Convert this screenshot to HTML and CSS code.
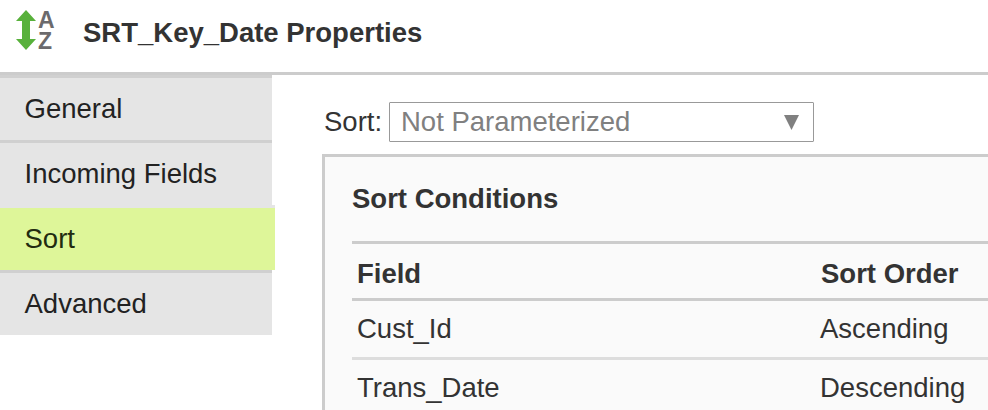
FILE: index.html
```html
<!DOCTYPE html>
<html lang="en">
<head>
<meta charset="utf-8">
<title>SRT_Key_Date Properties</title>
<link rel="stylesheet" href="styles.css">
</head>
<body>
<header class="header">
  <div class="logo">
    <svg class="arrow" width="20" height="40" viewBox="0 0 20 40" aria-hidden="true"><path d="M10 0 20 11H14V29H20L10 40 0 29H6V11H0Z" fill="#58b13b"/></svg>
    <span class="letters"><b>A</b><b>Z</b></span>
  </div>
  <h1 class="title">SRT_Key_Date Properties</h1>
</header>
<div class="body">
  <nav class="tabs">
    <a class="tab">General</a>
    <a class="tab">Incoming Fields</a>
    <a class="tab active">Sort</a>
    <a class="tab">Advanced</a>
  </nav>
  <main class="content">
    <div class="field">
      <label class="label">Sort:</label>
      <div class="select"><span>Not Parameterized</span>
        <svg width="15" height="15" viewBox="0 0 15 15" aria-hidden="true"><path d="M0 0H15L7.5 15Z" fill="#808080"/></svg>
      </div>
    </div>
    <section class="panel">
      <h2 class="panel-title">Sort Conditions</h2>
      <div class="row head"><span>Field</span><span>Sort Order</span></div>
      <div class="row first"><span>Cust_Id</span><span>Ascending</span></div>
      <div class="row"><span>Trans_Date</span><span>Descending</span></div>
    </section>
  </main>
</div>
</body>
</html>
```
FILE: styles.css
```css
* { box-sizing: border-box; }
body {
  margin: 0;
  height: 410px;
  overflow: hidden;
  display: flex;
  flex-direction: column;
  background: #fff;
  color: #333;
  font: 27.5px/32px "Liberation Sans", Arial, sans-serif;
  white-space: nowrap;
}
h1, h2 { margin: 0; font-size: inherit; font-weight: bold; }
.header {
  flex: none;
  height: 75px;
  display: flex;
  align-items: flex-start;
  border-bottom: 3px solid #ccc;
}
.logo { width: 83px; display: flex; padding: 10px 0 0 16px; }
.letters {
  display: flex;
  flex-direction: column;
  padding-left: 2px;
  color: #6b6a6d;
  font-size: 23px;
  line-height: 21px;
}
.title { padding-top: 17px; }
.body { flex: 1; display: flex; min-height: 0; }
.tabs { width: 272px; flex: none; color: #222; }
.tab {
  display: block;
  height: 65px;
  padding: 15px 0 0 24.5px;
  background: #e5e5e5;
  border-top: 3px solid #d0d0d0;
}
.active {
  width: 275px;
  background: #def699;
  color: #222b10;
  border-top-color: #e5e5e5;
}
.content { flex: 1; display: flex; flex-direction: column; padding: 27px 0 0 50px; min-width: 0; }
.tabs + .content { margin-left: 0; }
.field { flex: none; display: flex; height: 40px; padding-left: 2px; }
.label { width: 65px; padding-top: 4px; }
.select {
  width: 425px;
  display: flex;
  justify-content: space-between;
  padding: 3px 14px 0 11px;
  border: 1px solid #999;
  border-radius: 1px;
  color: #808080;
}
.select svg { margin-top: 9px; }
.panel {
  flex: 1;
  margin-top: 12px;
  padding: 26px 0 0 27px;
  background: #fafafa;
  border: solid #ccc;
  border-width: 3px 0 0 3px;
}
.panel-title { height: 58px; }
.row {
  display: grid;
  grid-template-columns: 463px 1fr;
  height: 59px;
  padding: 12px 0 0 5px;
  border-top: 3px solid #ddd;
}
.head { grid-template-columns: 464px 1fr; height: 57px; padding-top: 14px; border-top-color: #ccc; font-weight: bold; }
.first { border-top-color: #ccc; }
```
